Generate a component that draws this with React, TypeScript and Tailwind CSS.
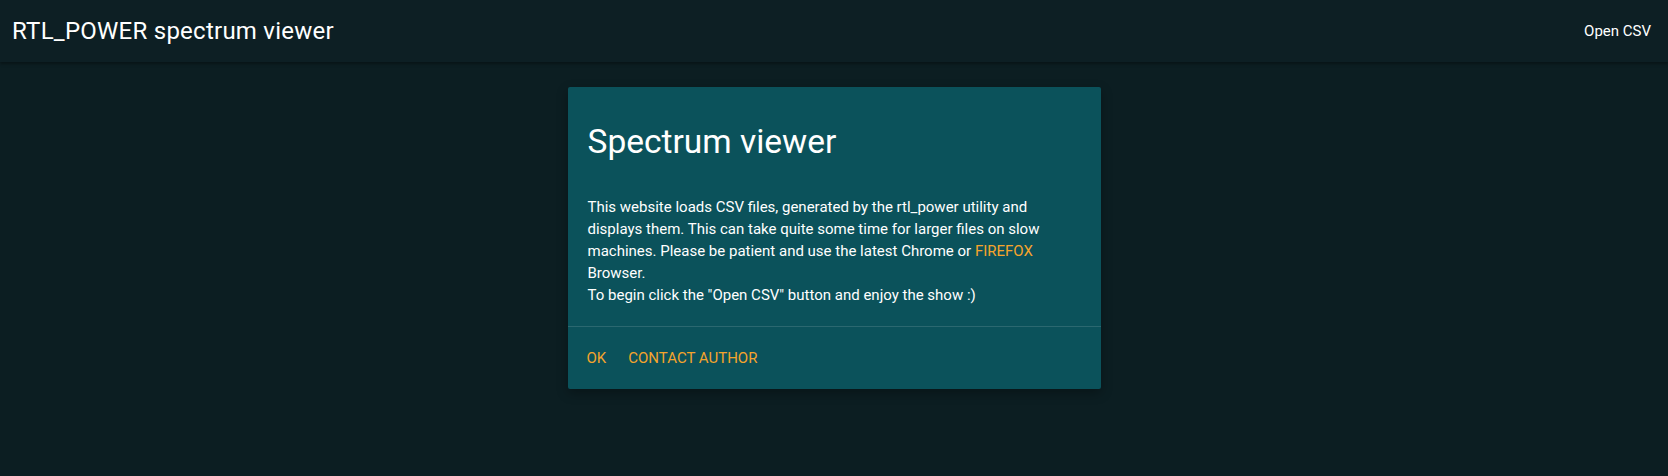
export default function App() {
  return (
    <div
      className="min-h-[476px] w-full bg-[#0c1e22] text-white"
      style={{ fontFamily: "Roboto, 'Liberation Sans', sans-serif" }}
    >
      <header className="flex h-[62px] items-center justify-between bg-[#0d1f24] pl-[12px] pr-[17px] shadow-[0_2px_3px_rgba(0,0,0,0.35)]">
        <h1 className="text-[24px] leading-[28px] font-normal tracking-[0.25px]">RTL_POWER spectrum viewer</h1>
        <button className="text-[15px] leading-[22px] text-white">Open CSV</button>
      </header>

      <main className="flex justify-center pt-[25px]">
        <div className="w-[533px] rounded-[2px] bg-[#0b525b] shadow-[0_4px_12px_rgba(0,0,0,0.3)]">
          <div className="px-[20px] pt-[35px] pb-[20px]">
            <h2 className="text-[33.5px] leading-[40px] font-normal">Spectrum viewer</h2>
            <p className="mt-[34px] text-[15px] leading-[22px]">
              This website loads CSV files, generated by the rtl_power utility and displays them. This can
              take quite some time for larger files on slow machines. Please be patient and use the latest
              Chrome or <a href="#" className="text-[#f5a42c]">FIREFOX</a> Browser.
              <br />
              To begin click the "Open CSV" button and enjoy the show :)
            </p>
          </div>
          <div className="border-t border-[#2b6870] flex gap-[22px] pl-[19px] pr-[20px] py-[20px] text-[15px] leading-[22px] text-[#f5a42c]">
            <button>OK</button>
            <button>CONTACT AUTHOR</button>
          </div>
        </div>
      </main>
    </div>
  );
}
